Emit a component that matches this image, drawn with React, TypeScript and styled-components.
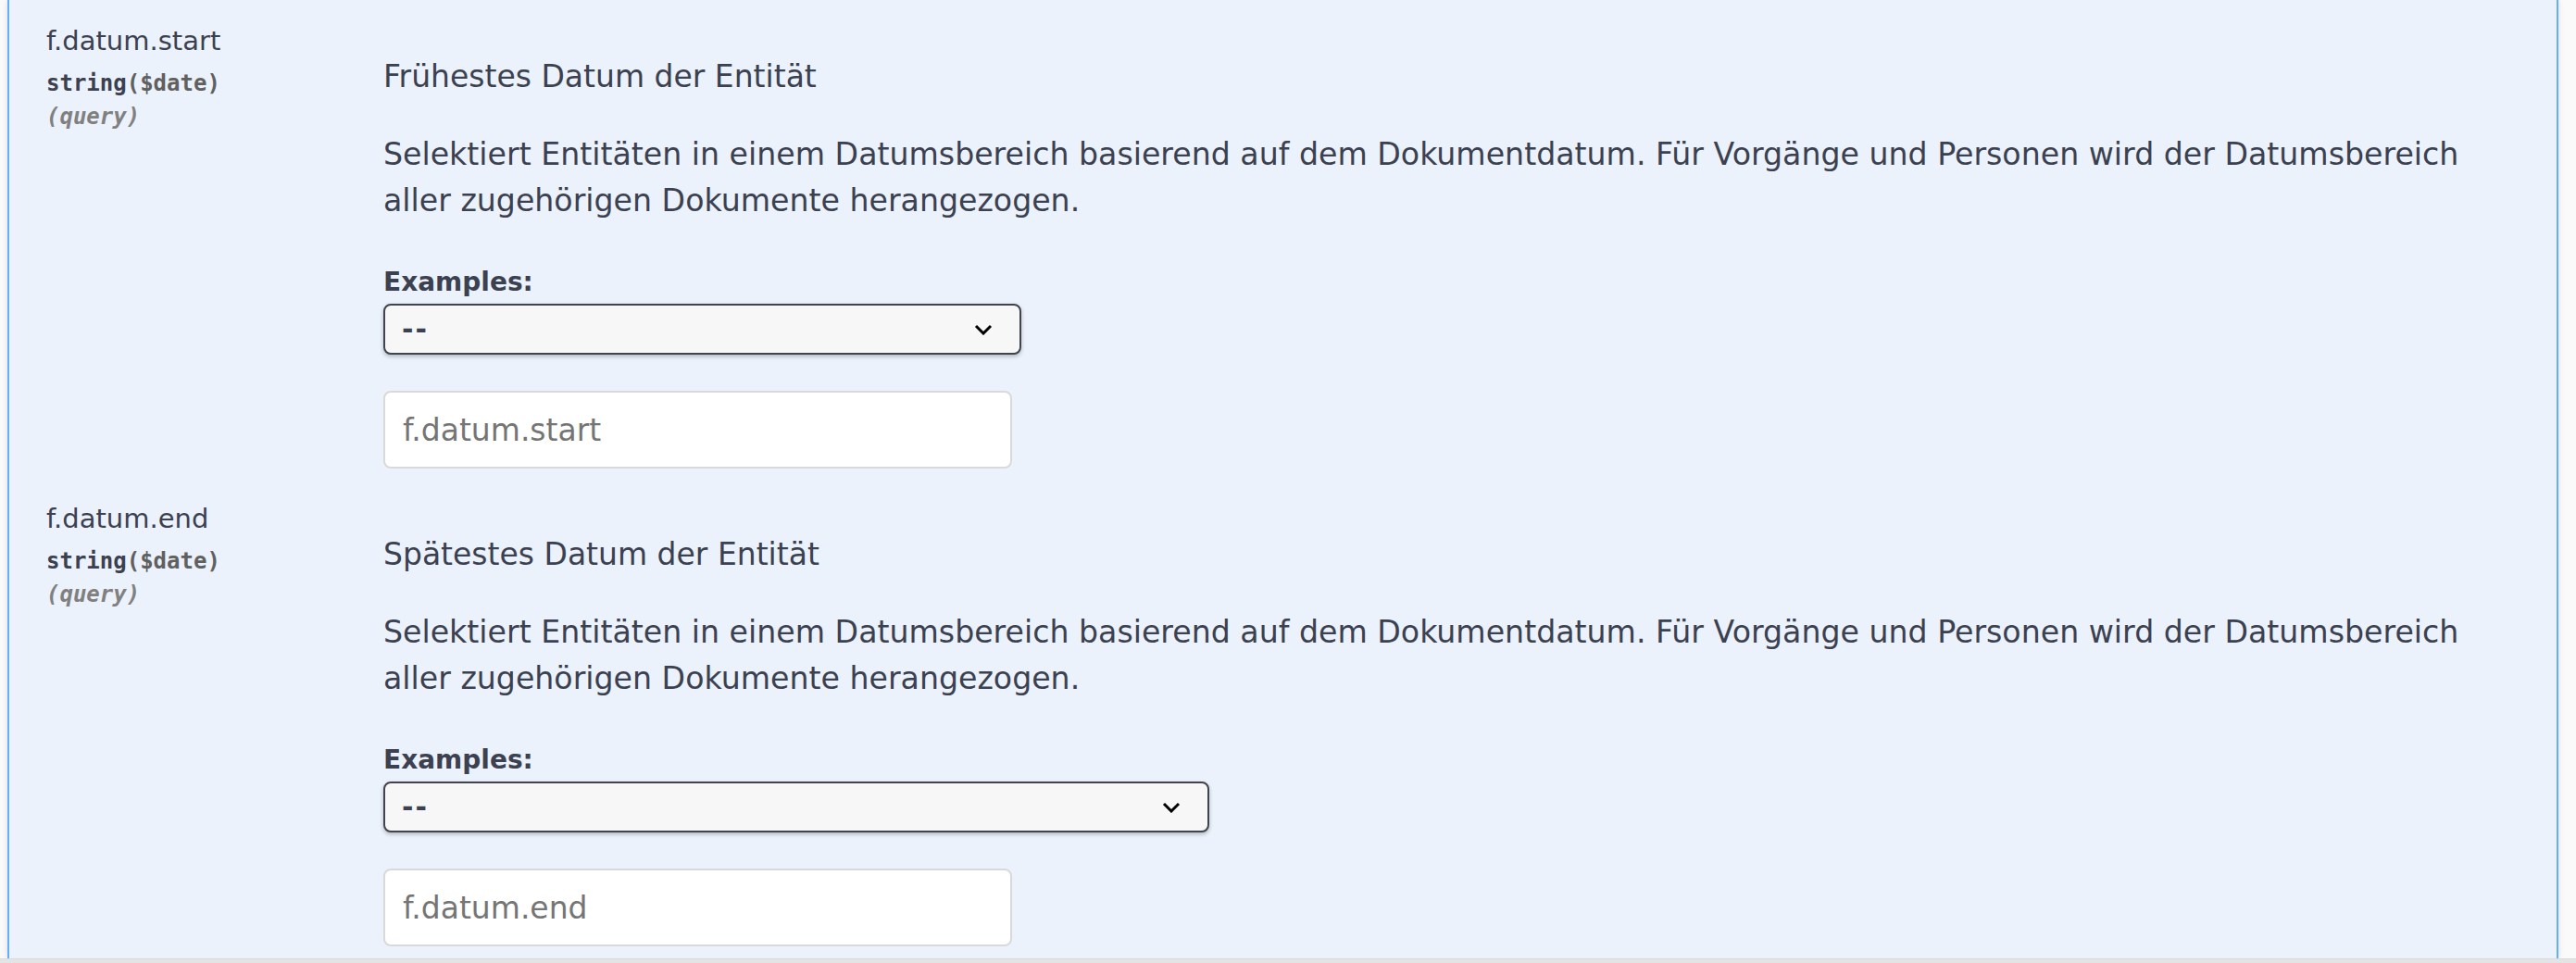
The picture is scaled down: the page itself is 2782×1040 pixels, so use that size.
import styled, { createGlobalStyle } from "styled-components";

const GlobalStyle = createGlobalStyle`
  html, body {
    margin: 0;
    padding: 0;
    background: #fafafa;
  }
  body {
    font-family: "DejaVu Sans", "Open Sans", sans-serif;
    color: #3b4151;
  }
`;

const Page = styled.div`
  height: 1040px;
  display: flex;
  flex-direction: column;
  overflow: hidden;
`;

const Frame = styled.div`
  flex: 1;
  min-height: 0;
  display: flex;
  padding-left: 8px;
`;

const Opblock = styled.section`
  width: 2755px;
  box-sizing: border-box;
  background: #ebf2fb;
  border-left: 2px solid #61affe;
  border-right: 2px solid #61affe;
  box-shadow: 0 0 6px rgba(0, 0, 0, 0.12);
  padding: 0 60px 0 40px;
`;

const ScrollEdge = styled.div`
  height: 4px;
  background: #e4e4e4;
  border-top: 1px solid #dadada;
`;

const Row = styled.div`
  display: grid;
  grid-template-columns: 364px 1fr;
  height: 516px;
  box-sizing: border-box;
  padding-top: 23px;
`;

const NameCol = styled.div`
  display: flex;
  flex-direction: column;
`;

const ParamName = styled.div`
  font-size: 29px;
  line-height: 42px;
`;

const ParamType = styled.div`
  font-family: "DejaVu Sans Mono", "Liberation Mono", monospace;
  font-weight: 700;
  font-size: 24px;
  line-height: 36px;
  padding-top: 7px;
  span {
    color: #606060;
  }
`;

const ParamIn = styled.div`
  font-family: "DejaVu Sans Mono", "Liberation Mono", monospace;
  font-weight: 700;
  font-style: italic;
  font-size: 24px;
  line-height: 36px;
  color: #808080;
`;

const DescCol = styled.div`
  display: flex;
  flex-direction: column;
  align-items: flex-start;
  padding-top: 35px;
`;

const Summary = styled.p`
  margin: 0 0 34px;
  font-size: 33px;
  line-height: 50px;
`;

const Description = styled.p`
  margin: 0 0 45px;
  font-size: 33.2px;
  line-height: 50px;
`;

const ExamplesLabel = styled.label`
  font-size: 28px;
  font-weight: 700;
  line-height: 36px;
  margin-bottom: 5px;
`;

const SelectWrap = styled.div<{ $width: number }>`
  position: relative;
  width: ${(p) => p.$width}px;
  height: 55px;
`;

const Select = styled.select`
  appearance: none;
  -webkit-appearance: none;
  width: 100%;
  height: 100%;
  box-sizing: border-box;
  margin: 0;
  border: 2px solid #41444e;
  border-radius: 8px;
  background: #f7f7f7;
  box-shadow: 0 2px 4px rgba(0, 0, 0, 0.25);
  padding: 0 60px 0 18px;
  font-family: "DejaVu Sans", sans-serif;
  font-weight: 700;
  font-size: 30px;
  letter-spacing: 2px;
  color: #3b4151;
`;

const Chevron = styled.svg`
  position: absolute;
  right: 31px;
  top: 50%;
  margin-top: -6px;
  width: 20px;
  height: 12px;
  pointer-events: none;
`;

const ValueInput = styled.input`
  margin-top: 39px;
  width: 679px;
  height: 84px;
  box-sizing: border-box;
  border: 2px solid #d9d9d9;
  border-radius: 8px;
  background: #fff;
  padding: 0 19px;
  font-family: "DejaVu Sans", sans-serif;
  font-size: 33px;
  color: #3b4151;
  outline: none;
  &::placeholder {
    color: #757575;
  }
`;

interface Param {
  name: string;
  summary: string;
  selectWidth: number;
}

const description =
  "Selektiert Entitäten in einem Datumsbereich basierend auf dem Dokumentdatum. Für Vorgänge und Personen wird der Datumsbereich aller zugehörigen Dokumente herangezogen.";

const params: Param[] = [
  { name: "f.datum.start", summary: "Frühestes Datum der Entität", selectWidth: 689 },
  { name: "f.datum.end", summary: "Spätestes Datum der Entität", selectWidth: 892 },
];

function ParameterRow({ param }: { param: Param }) {
  return (
    <Row>
      <NameCol>
        <ParamName>{param.name}</ParamName>
        <ParamType>
          string<span>($date)</span>
        </ParamType>
        <ParamIn>(query)</ParamIn>
      </NameCol>
      <DescCol>
        <Summary>{param.summary}</Summary>
        <Description>{description}</Description>
        <ExamplesLabel>Examples:</ExamplesLabel>
        <SelectWrap $width={param.selectWidth}>
          <Select defaultValue="">
            <option value="">--</option>
          </Select>
          <Chevron viewBox="0 0 20 12">
            <path d="M2 2 L10 10 L18 2" fill="none" stroke="#000" strokeWidth="3" />
          </Chevron>
        </SelectWrap>
        <ValueInput type="text" placeholder={param.name} />
      </DescCol>
    </Row>
  );
}

export default function App() {
  return (
    <>
      <GlobalStyle />
      <Page>
        <Frame>
          <Opblock>
            {params.map((p) => (
              <ParameterRow key={p.name} param={p} />
            ))}
          </Opblock>
        </Frame>
        <ScrollEdge />
      </Page>
    </>
  );
}
